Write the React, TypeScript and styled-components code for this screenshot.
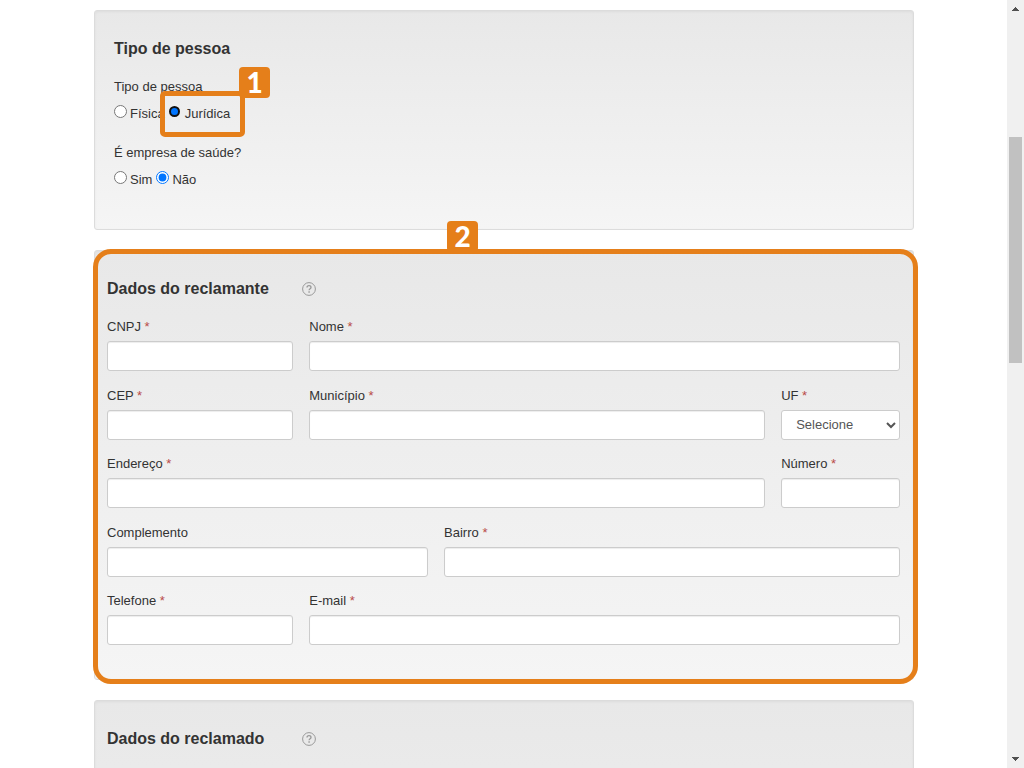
import React, { useId } from "react";
import styled, { createGlobalStyle, css } from "styled-components";

const GlobalStyle = createGlobalStyle`
  *, *::before, *::after { box-sizing: border-box; }
  body {
    margin: 0;
    background: #fff;
    color: #333;
    font: 13px/20px "Liberation Sans", Arial, sans-serif;
  }
`;

const Viewport = styled.div`
  display: grid;
  grid-template-columns: minmax(0, 1fr) 17px;
  height: 100vh;
  overflow: hidden;
`;

const Main = styled.main`
  display: flex;
  flex-direction: column;
  align-items: center;
  gap: 20px;
  padding: 10px 0 0 1px;
  min-height: 0;
  overflow: hidden;
`;

const Panel = styled.section<{ $inset: number; $tall?: boolean }>`
  position: relative;
  display: flex;
  flex-direction: column;
  flex-shrink: 0;
  gap: 18px;
  width: 100%;
  max-width: 820px;
  min-height: ${(p) => (p.$tall ? 430 : 220)}px;
  padding: 28px 13px 34px ${(p) => p.$inset}px;
  border: 1px solid #dcdcdc;
  border-radius: 3px;
  background: linear-gradient(#e8e8e8, #f5f5f5);
  box-shadow: inset 0 1px 3px rgba(0, 0, 0, 0.05);
`;

const PanelHeader = styled.header`
  display: flex;
  align-items: center;
`;

const Title = styled.h2`
  min-width: 195px;
  margin: 0;
  font-size: 16px;
  line-height: 20px;
  font-weight: bold;
`;

const HelpButton = styled.button`
  display: flex;
  padding: 0;
  border: 0;
  background: none;
  color: #999;
`;

const Choices = styled.div`
  display: flex;
  flex-direction: column;
  gap: 19px;
`;

const ChoiceGroup = styled.fieldset`
  margin: 0;
  padding: 0;
  border: 0;
`;

const Legend = styled.legend`
  margin-bottom: 7px;
  padding: 0;
`;

const ChoiceRow = styled.div`
  display: flex;
  gap: 4px;
`;

const Choice = styled.label`
  display: flex;
  gap: 3px;
`;

const Radio = styled.input<{ $active?: boolean }>`
  width: 13px;
  height: 13px;
  margin: 1px 0 0;
  ${(p) =>
    p.$active &&
    css`
      appearance: none;
      width: 11px;
      height: 11px;
      margin: 2px 2px 0 0;
      border: 2px solid #101010;
      border-radius: 50%;
      background: #0075ff;
    `}
`;

const Fields = styled.form`
  display: grid;
  grid-template-columns: repeat(12, minmax(0, 1fr));
  column-gap: 16px;
  flex: 1;
  align-content: space-between;
`;

const FieldBox = styled.div<{ $span: number }>`
  display: flex;
  flex-direction: column;
  gap: 4px;
  grid-column: span ${(p) => p.$span};
`;

const Required = styled.span`
  color: #b94a48;
`;

const control = css`
  width: 100%;
  height: 30px;
  border: 1px solid #ccc;
  border-radius: 3px;
  background: #fff;
  color: #555;
  font: inherit;
`;

const TextInput = styled.input`
  ${control}
  padding: 4px 6px;
  box-shadow: inset 0 1px 1px rgba(0, 0, 0, 0.075);
`;

const Select = styled.select`
  ${control}
  padding: 4px 0 4px 10px;
`;

const Highlight = styled.div<{ $round: number }>`
  position: absolute;
  border: 5px solid #e57f1a;
  border-radius: ${(p) => p.$round}px;
  pointer-events: none;
`;

const ChoiceHighlight = styled(Highlight)`
  left: 65px;
  top: 80px;
  width: 85px;
  height: 46px;
`;

const PanelHighlight = styled(Highlight)`
  inset: -2px -5px -5px -2px;
`;

const Badge = styled.span<{ $left: number; $top: number }>`
  position: absolute;
  left: ${(p) => p.$left}px;
  top: ${(p) => p.$top}px;
  width: 31px;
  height: 31px;
  border-radius: 4px;
  background: #e57f1a;
  color: #fff;
  font: 900 28px/31px Lato, sans-serif;
  text-align: center;
`;

const ScrollTrack = styled.div`
  display: flex;
  flex-direction: column;
  align-items: center;
  justify-content: space-between;
  padding: 7px 0;
  background: #f0f0f0;
  position: relative;
`;

const ScrollThumb = styled.div`
  position: absolute;
  left: 2px;
  right: 2px;
  top: 137px;
  height: 226px;
  background: #c1c1c1;
`;

function Help() {
  return (
    <HelpButton type="button" aria-label="Ajuda">
      <svg width="14" height="14" viewBox="0 0 14 14" fill="none" stroke="currentColor">
        <circle cx="7" cy="7" r="6.4" />
        <path d="M5 5.6C5 4.3 5.8 3.7 7 3.7s2 .7 2 1.7C9 6.7 7.1 6.7 7.1 8.3" strokeWidth="1.3" />
        <path d="M7.1 9.3v1.4" strokeWidth="1.4" />
      </svg>
    </HelpButton>
  );
}

type FieldProps = { label: string; span: number; required?: boolean; options?: string[] };

function Field({ label, span, required, options }: FieldProps) {
  const id = useId();
  return (
    <FieldBox $span={span}>
      <label htmlFor={id}>
        {label}
        {required && <Required> *</Required>}
      </label>
      {options ? (
        <Select id={id}>
          {options.map((o) => (
            <option key={o}>{o}</option>
          ))}
        </Select>
      ) : (
        <TextInput id={id} type="text" />
      )}
    </FieldBox>
  );
}

const claimantFields: FieldProps[] = [
  { label: "CNPJ", span: 3, required: true },
  { label: "Nome", span: 9, required: true },
  { label: "CEP", span: 3, required: true },
  { label: "Município", span: 7, required: true },
  { label: "UF", span: 2, required: true, options: ["Selecione"] },
  { label: "Endereço", span: 10, required: true },
  { label: "Número", span: 2, required: true },
  { label: "Complemento", span: 5 },
  { label: "Bairro", span: 7, required: true },
  { label: "Telefone", span: 3, required: true },
  { label: "E-mail", span: 9, required: true },
];

export default function App() {
  return (
    <>
      <GlobalStyle />
      <Viewport>
        <Main>
          <Panel $inset={19}>
            <PanelHeader>
              <Title>Tipo de pessoa</Title>
            </PanelHeader>
            <Choices>
              <ChoiceGroup>
                <Legend>Tipo de pessoa</Legend>
                <ChoiceRow>
                  <Choice><Radio type="radio" name="tipo" />Física</Choice>
                  <Choice><Radio type="radio" name="tipo" defaultChecked $active />Jurídica</Choice>
                </ChoiceRow>
              </ChoiceGroup>
              <ChoiceGroup>
                <Legend>É empresa de saúde?</Legend>
                <ChoiceRow>
                  <Choice><Radio type="radio" name="saude" />Sim</Choice>
                  <Choice><Radio type="radio" name="saude" defaultChecked />Não</Choice>
                </ChoiceRow>
              </ChoiceGroup>
            </Choices>
            <ChoiceHighlight $round={5} />
            <Badge $left={144} $top={56}>1</Badge>
          </Panel>

          <Panel $inset={12} $tall>
            <PanelHeader>
              <Title>Dados do reclamante</Title>
              <Help />
            </PanelHeader>
            <Fields>
              {claimantFields.map((f) => (
                <Field key={f.label} {...f} />
              ))}
            </Fields>
            <PanelHighlight $round={18} />
            <Badge $left={352} $top={-30}>2</Badge>
          </Panel>

          <Panel $inset={12} $tall>
            <PanelHeader>
              <Title>Dados do reclamado</Title>
              <Help />
            </PanelHeader>
          </Panel>
        </Main>
        <ScrollTrack aria-hidden="true">
          <svg width="7" height="4" viewBox="0 0 7 4" fill="#505050">
            <path d="M3 0h1v1h1v1h1v1h1v1H0V3h1V2h1V1h1z" />
          </svg>
          <ScrollThumb />
          <svg width="7" height="4" viewBox="0 0 7 4" fill="#505050">
            <path d="M0 0h7v1H6v1H5v1H4v1H3V3H2V2H1V1H0z" />
          </svg>
        </ScrollTrack>
      </Viewport>
    </>
  );
}
